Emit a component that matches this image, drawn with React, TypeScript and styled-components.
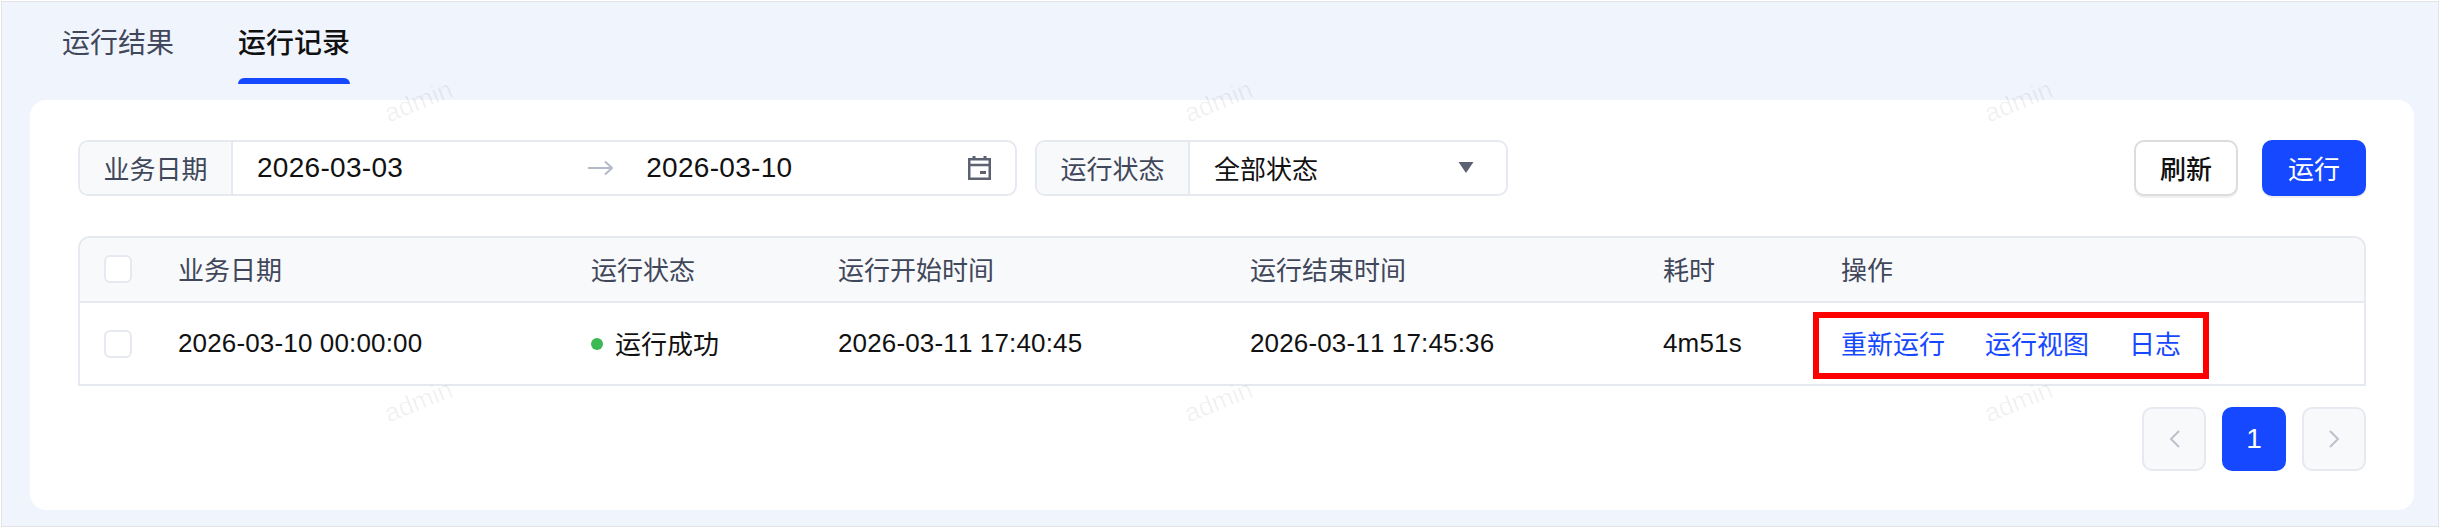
import React from "react";
import styled, { createGlobalStyle } from "styled-components";

const GlobalStyle = createGlobalStyle`
  html, body {
    margin: 0;
    padding: 0;
    background: #fff;
  }
  * {
    box-sizing: border-box;
  }
`;

const BLUE = "#1648ff";
const LINE = "#e6e9ef";

const columns = [
  { title: "业务日期", value: "2026-03-10 00:00:00" },
  { title: "运行状态", value: "运行成功", status: true },
  { title: "运行开始时间", value: "2026-03-11 17:40:45" },
  { title: "运行结束时间", value: "2026-03-11 17:45:36" },
  { title: "耗时", value: "4m51s" },
];

const App: React.FC = () => {
  return (
    <Frame>
      <GlobalStyle />
      <Tabs>
        <Tab>运行结果</Tab>
        <Tab $active>运行记录</Tab>
      </Tabs>
      <Card>
        <Toolbar>
          <Filters>
            <FieldGroup $width={939}>
              <FieldLabel>业务日期</FieldLabel>
              <DateRange>
                <DateText>2026-03-03</DateText>
                <ArrowBox>
                  <svg width="25" height="16" viewBox="0 0 25 16" fill="none">
                    <path
                      d="M0 8H24M17 1.5L24 8L17 14.5"
                      stroke="#b4bac6"
                      strokeWidth="2"
                    />
                  </svg>
                </ArrowBox>
                <DateText>2026-03-10</DateText>
                <CalendarBox>
                  <svg width="23" height="24" viewBox="0 0 23 24" fill="none">
                    <path
                      d="M6 0V4M17 0V4"
                      stroke="#5d6272"
                      strokeWidth="3"
                    />
                    <rect
                      x="1.25"
                      y="3.25"
                      width="20.5"
                      height="19.5"
                      stroke="#5d6272"
                      strokeWidth="2.5"
                    />
                    <path d="M1 9H22" stroke="#5d6272" strokeWidth="2.5" />
                    <path d="M12 16.5H18" stroke="#5d6272" strokeWidth="3" />
                  </svg>
                </CalendarBox>
              </DateRange>
            </FieldGroup>
            <FieldGroup $width={473}>
              <FieldLabel>运行状态</FieldLabel>
              <SelectValue>
                全部状态
                <svg width="16" height="11" viewBox="0 0 16 11">
                  <path d="M0.5 0H15.5L8 11Z" fill="#5d6272" />
                </svg>
              </SelectValue>
            </FieldGroup>
          </Filters>
          <Actions>
            <Button>刷新</Button>
            <Button $primary>运行</Button>
          </Actions>
        </Toolbar>

        <Table>
          <HeadRow>
            <CheckCell>
              <Checkbox />
            </CheckCell>
            {columns.map((col) => (
              <Cell key={col.title}>{col.title}</Cell>
            ))}
            <Cell>操作</Cell>
          </HeadRow>
          <BodyRow>
            <CheckCell>
              <Checkbox />
            </CheckCell>
            {columns.map((col) =>
              col.status ? (
                <Cell key={col.title} $cjk>
                  <StatusDot />
                  {col.value}
                </Cell>
              ) : (
                <ValueCell key={col.title}>{col.value}</ValueCell>
              )
            )}
            <OpsCell>
              <OpLink>重新运行</OpLink>
              <OpLink>运行视图</OpLink>
              <OpLink>日志</OpLink>
              <Highlight />
            </OpsCell>
          </BodyRow>
        </Table>

        <Pagination>
          <PageButton>
            <svg width="11" height="18" viewBox="0 0 11 18" fill="none">
              <path d="M10 1L2 9L10 17" stroke="#bcc1cc" strokeWidth="2" />
            </svg>
          </PageButton>
          <PageButton $active>1</PageButton>
          <PageButton>
            <svg width="11" height="18" viewBox="0 0 11 18" fill="none">
              <path d="M1 1L9 9L1 17" stroke="#bcc1cc" strokeWidth="2" />
            </svg>
          </PageButton>
        </Pagination>
      </Card>

      <Watermarks>
        {Array.from({ length: 6 }).map((_, i) => (
          <Mark key={i}>
            <span>admin</span>
          </Mark>
        ))}
      </Watermarks>
    </Frame>
  );
};

const Frame = styled.div`
  position: relative;
  width: 2438px;
  height: 526px;
  margin: 1px 0 0 1px;
  padding: 0 24px 0 28px;
  border: 1px solid #e3e3e5;
  background: #f0f4fc;
  overflow: hidden;
  font-family: "Liberation Sans", "Noto Sans CJK SC", sans-serif;
  font-kerning: none;
  color: #111;
`;

const Tabs = styled.div`
  display: flex;
  gap: 64px;
  height: 98px;
  padding-left: 32px;
`;

const Tab = styled.div<{ $active?: boolean }>`
  padding-top: 24px;
  font-size: 28px;
  line-height: 36px;
  font-weight: ${(p) => (p.$active ? 500 : 400)};
  color: ${(p) => (p.$active ? "#111" : "#41475a")};

  &::after {
    content: "";
    display: block;
    height: 6px;
    margin-top: 16px;
    border-radius: 6px 6px 0 0;
    background: ${(p) => (p.$active ? BLUE : "transparent")};
  }
`;

const Card = styled.div`
  height: 410px;
  padding: 40px 48px 0 48px;
  border-radius: 16px;
  background: #fff;
`;

const Toolbar = styled.div`
  display: flex;
  justify-content: space-between;
  height: 56px;
`;

const Filters = styled.div`
  display: flex;
  gap: 18px;
`;

const FieldGroup = styled.div<{ $width: number }>`
  display: flex;
  width: ${(p) => p.$width}px;
  height: 56px;
  border: 2px solid ${LINE};
  border-radius: 10px;
  overflow: hidden;
`;

const FieldLabel = styled.div`
  display: flex;
  align-items: center;
  justify-content: center;
  flex: 0 0 153px;
  padding-bottom: 2px;
  border-right: 2px solid ${LINE};
  background: #f8f9fb;
  font-size: 26px;
  color: #41475a;
`;

const DateRange = styled.div`
  display: flex;
  align-items: center;
  flex: 1;
  padding: 0 24px;
`;

const DateText = styled.span`
  font-size: 28px;
  letter-spacing: 0.3px;
`;

const ArrowBox = styled.span`
  display: flex;
  margin: 0 33px 0 185px;
`;

const CalendarBox = styled.span`
  display: flex;
  margin-left: auto;
`;

const SelectValue = styled.div`
  display: flex;
  align-items: center;
  justify-content: space-between;
  flex: 1;
  padding: 0 32px 2px 24px;
  font-size: 26px;
`;

const Actions = styled.div`
  display: flex;
  gap: 24px;
`;

const Button = styled.button<{ $primary?: boolean }>`
  width: 104px;
  height: 56px;
  padding: 0 0 2px;
  border: 2px solid ${(p) => (p.$primary ? BLUE : "#dcdcdc")};
  border-radius: 10px;
  background: ${(p) => (p.$primary ? BLUE : "#fff")};
  box-shadow: 0 2px 0 rgba(0, 0, 0, 0.06);
  font-family: inherit;
  font-size: 26px;
  font-weight: ${(p) => (p.$primary ? 400 : 500)};
  color: ${(p) => (p.$primary ? "#fff" : "#111")};
`;

const Table = styled.div`
  margin-top: 40px;
  border: 2px solid ${LINE};
  border-radius: 12px 12px 0 0;
`;

const gridColumns = "98px 413px 247px 412px 413px 178px 1fr";

const HeadRow = styled.div`
  display: grid;
  grid-template-columns: ${gridColumns};
  align-items: center;
  height: 65px;
  padding-bottom: 2px;
  border-bottom: 2px solid ${LINE};
  border-radius: 10px 10px 0 0;
  background: #f8f9fb;
  font-size: 26px;
  color: #41475a;
`;

const BodyRow = styled.div`
  display: grid;
  grid-template-columns: ${gridColumns};
  align-items: center;
  height: 81px;
  font-size: 26px;
`;

const Cell = styled.div<{ $cjk?: boolean }>`
  display: flex;
  align-items: center;
  padding-bottom: ${(p) => (p.$cjk ? "2px" : "0")};
`;

const ValueCell = styled.div`
  letter-spacing: 0.15px;
`;

const CheckCell = styled.div`
  display: flex;
  padding-left: 24px;
`;

const Checkbox = styled.span`
  width: 28px;
  height: 28px;
  border: 2px solid ${LINE};
  border-radius: 6px;
  background: #fff;
`;

const StatusDot = styled.span`
  width: 12px;
  height: 12px;
  margin: 2px 12px 0 0;
  border-radius: 50%;
  background: #3cb854;
`;

const OpsCell = styled.div`
  position: relative;
  display: flex;
  gap: 40px;
  padding-bottom: 2px;
`;

const OpLink = styled.a`
  color: ${BLUE};
`;

const Highlight = styled.div`
  position: absolute;
  left: -28px;
  top: -12px;
  width: 396px;
  height: 67px;
  border: 6px solid #ff0000;
`;

const Pagination = styled.div`
  display: flex;
  justify-content: flex-end;
  gap: 16px;
  margin-top: 21px;
`;

const PageButton = styled.div<{ $active?: boolean }>`
  display: flex;
  align-items: center;
  justify-content: center;
  width: 64px;
  height: 64px;
  border: 2px solid ${(p) => (p.$active ? BLUE : LINE)};
  border-radius: 10px;
  background: ${(p) => (p.$active ? BLUE : "#f8f9fb")};
  font-size: 28px;
  color: #fff;
`;

const Watermarks = styled.div`
  position: absolute;
  left: 16px;
  top: -51px;
  display: grid;
  grid-template-columns: repeat(3, 800px);
  grid-auto-rows: 300px;
  pointer-events: none;
`;

const Mark = styled.div`
  display: flex;
  align-items: center;
  justify-content: center;

  span {
    transform: rotate(-22deg);
    font-size: 26px;
    color: rgba(0, 0, 0, 0.06);
  }
`;

export default App;
